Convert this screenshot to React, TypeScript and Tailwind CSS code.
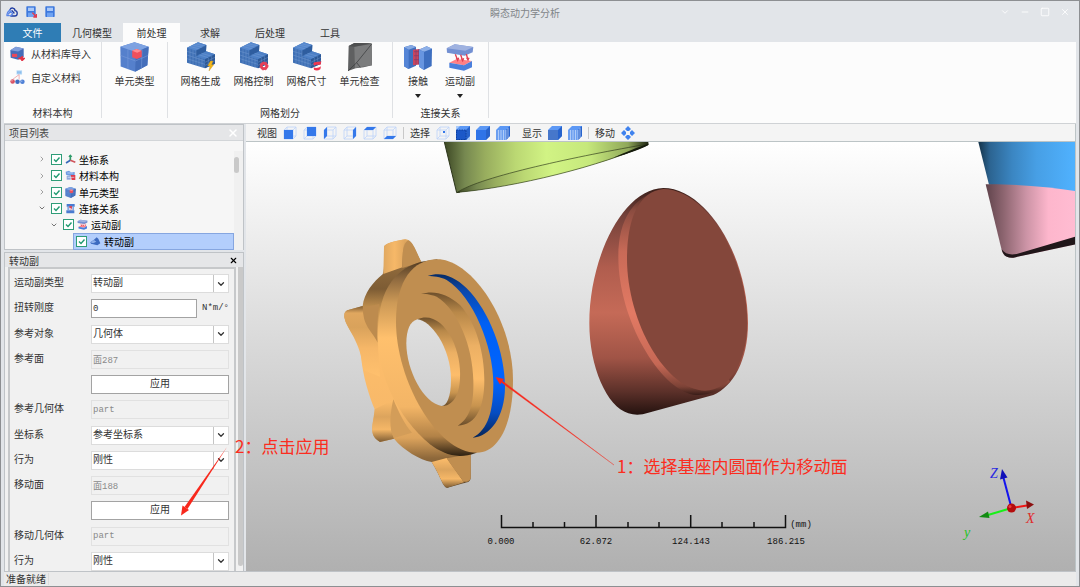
import { useState, type ReactNode } from "react";
import { ChevronDown, ChevronRight, Minus, Square, X } from "lucide-react";

const tabs = [
  { name: "几何模型", width: "w-[62px]" },
  { name: "前处理", width: "w-[57px]" },
  { name: "求解", width: "w-[60px]" },
  { name: "后处理", width: "w-[60px]" },
  { name: "工具", width: "w-[60px]" },
];

/* ---------- Icons ---------- */

function CloudIcon() {
  return (
    <svg viewBox="0 0 36 30" className="w-3 h-[10px]" fill="none" strokeWidth="4" strokeLinecap="round">
      <path d="M12 8 C15 0 27 2 27 11 C36 12 36 27 26 27 H15 M24 18 L18 11" stroke="#1d3aa0" />
      <path d="M12 8 C7 12 2 20 3 26 H10 M7 21 L14 13 L20 20 L14 27" stroke="#5a86e8" />
    </svg>
  );
}

function SaveIcon({ arrow = false }: { arrow?: boolean }) {
  return (
    <svg viewBox="0 0 33 36" className="w-[11px] h-3">
      <rect x="1" y="1" width="28" height="32" rx="2" fill="#3d78dd" />
      <rect x="6" y="5" width="18" height="10" fill="#a9c8f8" />
      <rect x="6" y="20" width="18" height="13" fill="#6ea2f2" />
      {arrow && <path d="M19 20 L30 32 M31 24 V33 H22" stroke="#e5394c" strokeWidth="4" fill="none" />}
    </svg>
  );
}

function CubeIcon({ small = false }: { small?: boolean }) {
  return (
    <svg viewBox="0 0 88 90" className={small ? "w-[11px] h-[11px]" : "w-[29px] h-[30px]"}>
      <path d="M44 0 L87 14 L83 70 L46 90 L2 74 L1 14 Z" fill="#5580cc" />
      <path d="M44 0 L87 14 L48 30 L1 14 Z" fill="#7ea3e2" />
      <path d="M48 30 L87 14 L83 70 L46 90 Z" fill="#446eba" />
      <path
        d="M24 22 L24 82 M1 40 L47 57 L86 40 M67 22 L65 80 M22 7 L67 22 M66 7 L24 22"
        stroke="#7f9fdc"
        strokeWidth="1.5"
        fill="none"
      />
      <path d="M37 26 L50 21 L66 26 V45 L51 51 L37 46 Z" fill="#f0505c" />
      <path d="M37 26 L50 21 L66 26 L52 32 Z" fill="#ff8b90" />
    </svg>
  );
}

function MeshIcon({ badge }: { badge: "bolt" | "gear" | "size" }) {
  return (
    <svg viewBox="0 0 90 90" className="w-[30px] h-[30px]">
      <path d="M36 1 L61 9 L60 28 L87 37 V65 L57 79 L3 62 V17 Z" fill="#3f70b5" />
      <path d="M36 1 L61 9 L30 26 L3 17 Z" fill="#5587cd" />
      <path d="M60 28 L87 37 L57 52 L30 43 Z" fill="#4d80c6" />
      <path d="M30 26 L61 9 L60 28 L30 43 Z" fill="#2e5d9f" />
      <path d="M57 52 L87 37 V65 L57 79 Z" fill="#2c5896" />
      <path
        d="M3 28 L30 36 M3 39 L57 57 M3 50 L57 67 M12 20 V65 M21 23 V68 M30 26 V71 M39 46 V74 M48 49 V77 M57 61 L87 46 M57 70 L87 56 M67 47 V74 M77 42 V70 M11 13 L40 21 M20 9 L49 16 M28 5 L56 12 M38 38 L66 47 M46 34 L75 42"
        stroke="#86abdf"
        strokeWidth="1"
        fill="none"
      />
      {badge === "bolt" && <path d="M73 57 L65 72 H72 L69 87 L83 68 H77 L81 57 Z" fill="#f2b71c" stroke="#b98611" />}
      {badge === "gear" && (
        <>
          <circle cx="75" cy="72" r="8" fill="none" stroke="#e64058" strokeWidth="8" />
          <circle cx="75" cy="72" r="12" fill="none" stroke="#e64058" strokeWidth="3" strokeDasharray="5 5" />
        </>
      )}
      {badge === "size" && (
        <>
          <path d="M64 64 C70 57 81 62 88 58 L86 68 C78 70 74 66 66 71 Z" fill="#f0364e" />
          <path d="M65 76 C72 80 80 77 87 73 L85 82 C78 87 70 86 66 83 Z" fill="#f0364e" />
        </>
      )}
    </svg>
  );
}

function CheckCellIcon() {
  return (
    <svg viewBox="0 0 78 90" className="w-[26px] h-[30px]">
      <path d="M5 12 L22 3 L74 4 L75 70 L50 76 L26 79 L3 87 Z" fill="#5f6061" />
      <path d="M22 14 L74 6 L75 70 L24 78 Z" fill="#7b7c7d" />
      <path d="M5 12 L22 3 L74 4 L22 14 Z" fill="#4e4f50" />
      <path d="M74 6 L29 62 L3 87" stroke="#343536" strokeWidth="2" fill="none" />
      <path d="M29 62 L40 76" stroke="#343536" strokeWidth="2" />
    </svg>
  );
}

function ContactIcon({ small = false }: { small?: boolean }) {
  return (
    <svg viewBox="0 0 88 84" className={small ? "w-[11px] h-[11px]" : "w-[30px] h-7"}>
      <path d="M2 13 L24 6 L38 12 V68 L16 78 L2 70 Z" fill="#3e6fc0" />
      <path d="M2 13 L24 6 L38 12 L16 20 Z" fill="#86a9e3" />
      <path d="M2 13 L16 20 V78 L2 70 Z" fill="#5585d6" />
      <path d="M29 20 L55 17 V64 L29 67 Z" fill="#c9455e" />
      <path d="M32 26 H53 M32 38 H53 M32 50 H53 M38 20 V65 M46 19 V64" stroke="#7c3d70" strokeWidth="2" />
      <path d="M47 20 L70 10 L86 17 L85 69 L62 81 L47 71 Z" fill="#3e6fc0" />
      <path d="M47 20 L70 10 L86 17 L62 26 Z" fill="#8eb0e8" />
      <path d="M47 20 L62 26 V81 L47 71 Z" fill="#6795e0" />
    </svg>
  );
}

function JointIcon({ small = false }: { small?: boolean }) {
  return (
    <svg viewBox="0 0 88 84" className={small ? "w-[11px] h-[11px]" : "w-[30px] h-7"}>
      <path d="M4 16 L28 4 L84 12 L82 28 L58 38 L5 29 Z" fill="#7390d2" />
      <path d="M4 16 L28 4 L84 12 L60 23 Z" fill="#9fb2e0" />
      <path d="M12 59 L34 48 L80 54 L56 67 Z" fill="#ff8086" />
      <path d="M12 59 L56 67 L80 54 V73 L56 83 L12 74 Z" fill="#4a7fdc" />
      <path d="M30 34 L37 52 M46 35 L52 53 M63 33 L68 51 M33 44 L37 52 L40 44 M48 46 L52 53 L55 46 M64 44 L68 51 L71 44" stroke="#e23f51" strokeWidth="4" fill="none" />
    </svg>
  );
}

function ImportIcon() {
  return (
    <svg viewBox="0 0 46 46" className="w-[15px] h-[15px] shrink-0">
      <path d="M1 13 L18 2 L42 8 V34 L25 42 L2 36 Z" fill="#456cb8" />
      <path d="M1 13 L18 2 L42 8 L25 17 Z" fill="#809fdc" />
      <path d="M6 24 H22 V34 H6 Z" fill="#e7485a" />
      <path d="M25 38 C35 42 38 36 38 31 M32 37 L44 38 L37 45 Z" stroke="#e23346" strokeWidth="4" fill="#e23346" />
    </svg>
  );
}

function CustomMaterialIcon() {
  return (
    <svg viewBox="0 0 46 46" className="w-[15px] h-[15px] shrink-0">
      <rect x="20" y="1" width="17" height="13" fill="#b9daf7" />
      <path d="M24 4 V11 M28 4 V11 M33 4 V11" stroke="#5d9fe0" strokeWidth="2" />
      <path d="M28 14 L8 29 M28 14 V29" stroke="#e88a8f" strokeWidth="2" />
      <circle cx="8" cy="35" r="7" fill="#d95365" />
      <circle cx="23" cy="36" r="7" fill="#3f6cc0" />
      <circle cx="38" cy="36" r="7" fill="#4f80d6" />
      <circle cx="6" cy="33" r="2" fill="#f3b4bb" />
      <circle cx="36" cy="34" r="2" fill="#b4cdf3" />
    </svg>
  );
}

function AxesIcon() {
  return (
    <svg viewBox="0 0 33 33" className="w-[11px] h-[11px]" fill="none" strokeWidth="5">
      <path d="M16 20 V3" stroke="#2f9c6a" />
      <path d="M16 19 L3 27" stroke="#3668b8" />
      <path d="M16 19 L31 25" stroke="#d0545a" />
      <path d="M10 9 L16 1 L22 9 Z" fill="#2f9c6a" />
    </svg>
  );
}

function MaterialIcon() {
  return (
    <svg viewBox="0 0 33 33" className="w-[11px] h-[11px]">
      <path d="M2 5 L12 2 L18 7 L29 6 V16 L14 17 L3 14 Z" fill="#6d9be2" />
      <path d="M5 17 H17 V29 H5 Z" fill="#8fa9dd" />
      <path d="M17 15 H31 V30 H20 Z" fill="#df3d4d" />
      <path d="M7 9 H25 M8 22 H28" stroke="#dbe7fa" strokeWidth="2" />
    </svg>
  );
}

function LinkIcon() {
  return (
    <svg viewBox="0 0 33 33" className="w-[11px] h-[11px]">
      <path d="M5 3 H29 V11 H5 Z M4 22 H28 V31 H4 Z" fill="#4a7bd0" />
      <path d="M7 11 H13 V22 H7 Z M22 11 H27 V22 H22 Z" fill="#86a7e2" />
      <path d="M13 9 H21 V15 L17 24 V15 H13 Z" fill="#d9495c" />
    </svg>
  );
}

function RevoluteIcon() {
  return (
    <svg viewBox="0 0 33 33" className="w-[11px] h-[11px]">
      <path d="M1 19 L12 11 L20 4 L25 8 L31 22 L22 28 L3 23 Z" fill="#3d6bc0" />
      <path d="M1 19 L12 12 L19 17 L9 22 Z" fill="#8fb0ea" />
    </svg>
  );
}

type Face = "front" | "back" | "left" | "right" | "top" | "bottom" | "point";

const facePaths: Record<Face, string> = {
  front: "M1 4 H10 V13 H1 Z",
  back: "M4 1 H13 V10 H4 Z",
  left: "M1 4 L4 1 V10 L1 13 Z",
  right: "M10 4 L13 1 V10 L10 13 Z",
  top: "M1 4 L4 1 H13 L10 4 Z",
  bottom: "M1 13 L4 10 H13 L10 13 Z",
  point: "M7 5 H9 V7 H7 Z",
};

// Wire cube with one face painted
function FaceCube({ face }: { face: Face }) {
  return (
    <svg viewBox="0 0 14 14" className="w-[14px] h-[14px]">
      <path d="M1 4 H10 V13 H1 Z M4 1 H13 V10 H4 Z M1 4 L4 1 M10 4 L13 1 M1 13 L4 10 M10 13 L13 10" stroke="#bcd3fa" strokeWidth="0.8" fill="none" />
      <path d={facePaths[face]} fill="#3478ea" />
    </svg>
  );
}

const cubeFronts = { edge: "#1c58c8", solid: "#2f74e8", mesh: "#6c9ff0", deep: "#4677cb" };

function SolidCube({ kind }: { kind: "edge" | "solid" | "mesh" | "deep" }) {
  return (
    <svg viewBox="0 0 14 14" className="w-[14px] h-[14px]">
      <path d="M0 4 L4 0 H14 V10 L10 14 H0 Z" fill="#5c98f5" />
      <path d="M0 4 H10 V14 H0 Z" fill={cubeFronts[kind]} />
      <path d="M10 4 L14 0 V10 L10 14 Z" fill="#2763cc" />
      {kind === "mesh" && <path d="M2.5 4 V14 M5 4 V14 M7.5 4 V14 M10 4 V14 M12 2 V12" stroke="#cfe0fb" strokeWidth="0.7" />}
      {kind === "edge" && <path d="M0.5 4 H10 V13.5 H0.5 Z" stroke="#0d3a92" strokeWidth="0.8" strokeDasharray="1.5 1" fill="none" />}
    </svg>
  );
}

function MoveIcon() {
  return (
    <svg viewBox="0 0 14 14" className="w-[14px] h-[14px]" fill="#3f82ee">
      <path d="M7 0 L10 3 L8 5 H6 L4 3 Z M7 14 L10 11 L8 9 H6 L4 11 Z M0 7 L3 4 L5 6 V8 L3 10 Z M14 7 L11 4 L9 6 V8 L11 10 Z" />
    </svg>
  );
}

/* ---------- Ribbon ---------- */

function RibbonGroup({ title, className, children }: { title?: string; className: string; children: ReactNode }) {
  return (
    <section className={`flex flex-col justify-between border-r border-[#dfe1e4] h-[76px] ${className}`}>
      {children}
      {title && <h2 className="text-center text-[10px] leading-[10px]">{title}</h2>}
    </section>
  );
}

function RibbonButton({ label, icon, className, menu = false }: { label: string; icon: ReactNode; className: string; menu?: boolean }) {
  return (
    <button className={`flex flex-col items-center ${className}`}>
      <span className="h-[30px] flex items-center">{icon}</span>
      <span className="mt-[3px] text-[10px] leading-3 whitespace-nowrap">{label}</span>
      {menu && (
        <svg viewBox="0 0 6 4" className="w-[6px] h-1 mt-[7px]">
          <path d="M0 0 H6 L3 4 Z" fill="#222" />
        </svg>
      )}
    </button>
  );
}

function Ribbon() {
  return (
    <div className="flex shrink-0 bg-[#fcfcfc] h-[82px] text-[#333] border-b border-[#cfd2d5]">
      <RibbonGroup title="材料本构" className="w-[98px]">
        <div className="pl-[6px] pt-[3px] flex flex-col gap-2">
          <button className="flex items-center gap-[6px] h-4 text-[10px] whitespace-nowrap">
            <ImportIcon />
            从材料库导入
          </button>
          <button className="flex items-center gap-[6px] h-4 text-[10px] whitespace-nowrap">
            <CustomMaterialIcon />
            自定义材料
          </button>
        </div>
      </RibbonGroup>
      <RibbonGroup className="w-[66px]">
        <RibbonButton label="单元类型" icon={<CubeIcon />} className="w-full" />
      </RibbonGroup>
      <RibbonGroup title="网格划分" className="w-[225px]">
        <div className="flex pl-[6px]">
          <RibbonButton label="网格生成" icon={<MeshIcon badge="bolt" />} className="w-[53px]" />
          <RibbonButton label="网格控制" icon={<MeshIcon badge="gear" />} className="w-[53px]" />
          <RibbonButton label="网格尺寸" icon={<MeshIcon badge="size" />} className="w-[53px]" />
          <RibbonButton label="单元检查" icon={<CheckCellIcon />} className="w-[53px]" />
        </div>
      </RibbonGroup>
      <RibbonGroup title="连接关系" className="w-24">
        <div className="flex pl-1">
          <RibbonButton label="接触" icon={<ContactIcon />} className="w-[42px]" menu />
          <RibbonButton label="运动副" icon={<JointIcon />} className="w-[42px]" menu />
        </div>
      </RibbonGroup>
    </div>
  );
}

/* ---------- Project tree ---------- */

const treeRows = [
  { label: "坐标系", icon: <AxesIcon />, indent: "pl-[33px]", arrow: "right" },
  { label: "材料本构", icon: <MaterialIcon />, indent: "pl-[33px]", arrow: "right" },
  { label: "单元类型", icon: <CubeIcon small />, indent: "pl-[33px]", arrow: "right" },
  { label: "连接关系", icon: <LinkIcon />, indent: "pl-[33px]", arrow: "down" },
  { label: "运动副", icon: <JointIcon small />, indent: "pl-[45px]", arrow: "down" },
  { label: "转动副", icon: <RevoluteIcon />, indent: "pl-[68px]", arrow: "" },
];

function ProjectTree() {
  return (
    <section className="border border-[#bfc3c7] bg-[#f6f6f6] h-[126px] flex flex-col shrink-0">
      <header className="h-4 shrink-0 flex items-center justify-between px-1 bg-[#e5e6e8] border-b border-[#d2d5d8]">
        <h2 className="text-[10px] text-[#444]">项目列表</h2>
        <button aria-label="关闭项目列表">
          <X className="w-3 h-3 text-white" strokeWidth={3} />
        </button>
      </header>
      <div className="flex grow pt-[10px]">
        <ul className="grow h-[99px] flex flex-col text-[10px] text-black">
          {treeRows.map((row) => (
            <li key={row.label} className={`flex-1 flex items-center ${row.indent}`}>
              {row.arrow === "right" && <ChevronRight className="w-2 h-2 mr-1 text-[#777]" />}
              {row.arrow === "down" && <ChevronDown className="w-2 h-2 mr-1 text-[#333]" />}
              <label
                className={`flex items-center gap-[3px] h-full grow ${
                  row.arrow === "" ? "bg-[#b3cefc] border border-[#86a6e0] pl-[2px]" : "pl-px"
                }`}
              >
                <span className="relative flex">
                  <input type="checkbox" defaultChecked className="peer appearance-none w-[11px] h-[11px] border border-[#2f9d78] bg-white" />
                  <svg viewBox="0 0 11 11" className="absolute inset-0 w-[11px] h-[11px] pointer-events-none hidden peer-checked:block">
                    <path d="M3 5.5 L5 7.5 L8.5 3.5" stroke="#1f9a70" strokeWidth="1.4" fill="none" />
                  </svg>
                </span>
                {row.icon}
                <span>{row.label}</span>
              </label>
            </li>
          ))}
        </ul>
        <div className="w-[9px] h-[99px] bg-[#f0f0f0]">
          <div className="w-[5px] h-4 mt-[6px] rounded-full bg-[#c9c9c9]" />
        </div>
      </div>
    </section>
  );
}

/* ---------- Property form ---------- */

function FormRow({ id, label, children }: { id?: string; label?: string; children: ReactNode }) {
  return (
    <div className="flex items-center">
      <div className="w-[77px] shrink-0">{label && <label htmlFor={id}>{label}</label>}</div>
      <div className="w-[138px] flex items-center">{children}</div>
    </div>
  );
}

function SelectField({ id, label, value }: { id: string; label: string; value: string }) {
  return (
    <FormRow id={id} label={label}>
      <div className="relative w-full">
        <select id={id} className="appearance-none block w-full h-[19px] pl-px bg-white border border-[#dcdcdc] text-[#333]">
          <option>{value}</option>
        </select>
        <span className="absolute right-px top-px w-[15px] h-[17px] border-l border-[#c4c4c4] flex items-center justify-center pointer-events-none">
          <ChevronDown className="w-[10px] h-[10px] text-[#333]" strokeWidth={3} />
        </span>
      </div>
    </FormRow>
  );
}

function ReadonlyField({ id, label, value }: { id: string; label: string; value: string }) {
  return (
    <FormRow id={id} label={label}>
      <input id={id} disabled defaultValue={value} className="w-full h-[19px] pl-px bg-[#f1f1f1] border border-[#e1e1e1] text-[#8a8a8a] text-[9px]" />
    </FormRow>
  );
}

function ApplyRow() {
  return (
    <FormRow>
      <button type="button" className="w-full h-[19px] bg-white border border-[#a3a3a3] text-[#333]">
        应用
      </button>
    </FormRow>
  );
}

function JointForm() {
  const [stiffness, setStiffness] = useState("0");

  return (
    <section className="mt-[2px] border border-b-0 border-[#bfc3c7] bg-[#f1f1f1] grow min-h-0 flex flex-col">
      <header className="h-[14px] shrink-0 flex items-center justify-between pl-1 pr-[5px] bg-[#e5e6e8]">
        <h2 className="text-[10px] text-[#333]">转动副</h2>
        <button aria-label="关闭转动副">
          <X className="w-[9px] h-[9px] text-black" strokeWidth={3} />
        </button>
      </header>
      <div className="flex justify-between grow min-h-0 pl-[3px]">
        <form className="w-[228px] border-2 border-b-0 border-[#c6c8ca] overflow-hidden pl-1 pt-[2px] text-[#333] text-[10px] font-['Liberation_Mono','Noto_Sans_CJK_SC',monospace]">
          <div className="h-[303px] grid grid-rows-12">
            <SelectField id="joint-type" label="运动副类型" value="转动副" />
            <FormRow id="stiffness" label="扭转刚度">
              <input
                id="stiffness"
                value={stiffness}
                onChange={(e) => setStiffness(e.target.value)}
                className="w-[106px] h-[19px] shrink-0 pl-px bg-white border border-[#a3a3a3] text-[9px]"
              />
              <span className="pl-[5px] text-[9px]">N*m/°</span>
            </FormRow>
            <SelectField id="ref-object" label="参考对象" value="几何体" />
            <ReadonlyField id="ref-face" label="参考面" value="面287" />
            <ApplyRow />
            <ReadonlyField id="ref-body" label="参考几何体" value="part" />
            <SelectField id="csys" label="坐标系" value="参考坐标系" />
            <SelectField id="ref-behavior" label="行为" value="刚性" />
            <ReadonlyField id="move-face" label="移动面" value="面188" />
            <ApplyRow />
            <ReadonlyField id="move-body" label="移动几何体" value="part" />
            <SelectField id="move-behavior" label="行为" value="刚性" />
          </div>
        </form>
        <div className="w-[5px] mb-[5px] bg-[#c9c9c9] rounded-b" />
      </div>
    </section>
  );
}

/* ---------- 3D view ---------- */

function ViewToolbar() {
  const views: Face[] = ["front", "back", "left", "right", "top", "bottom"];
  return (
    <div className="h-[18px] shrink-0 flex items-center gap-[6px] pl-[11px] bg-[#f4f4f4] border-b border-[#bcc4c6] text-[10px] text-[#333] whitespace-nowrap">
      <span>视图</span>
      {views.map((face) => (
        <button key={face} aria-label={face}>
          <FaceCube face={face} />
        </button>
      ))}
      <span className="w-px h-3 bg-[#c8c8c8]" />
      <span>选择</span>
      <button aria-label="point"><FaceCube face="point" /></button>
      <button aria-label="edge" className="bg-[#a9caf9]"><SolidCube kind="edge" /></button>
      <button aria-label="face"><SolidCube kind="solid" /></button>
      <button aria-label="element"><SolidCube kind="mesh" /></button>
      <span className="pl-[6px]">显示</span>
      <button aria-label="shaded"><SolidCube kind="deep" /></button>
      <button aria-label="meshed"><SolidCube kind="mesh" /></button>
      <span className="w-px h-3 bg-[#c8c8c8]" />
      <span>移动</span>
      <button aria-label="move"><MoveIcon /></button>
    </div>
  );
}

function Shade({ id, stops, horizontal = false }: { id: string; stops: [string, string][]; horizontal?: boolean }) {
  return (
    <linearGradient id={id} x1="0" y1="0" x2={horizontal ? "1" : "0"} y2={horizontal ? "0" : "1"}>
      {stops.map(([offset, color]) => (
        <stop key={offset} offset={offset} stopColor={color} />
      ))}
    </linearGradient>
  );
}

function Housing() {
  return (
    <g transform="translate(330 230) scale(0.33333)">
      {/* back body and lugs */}
      <path
        d="M162 52 C162 40 200 32 228 28 C246 28 262 75 274 96 L440 660 L422 674 L422 745 C420 757 412 757 400 760 L352 773 C338 772 335 745 305 696 C270 690 220 660 192 626 L150 636 C128 622 126 610 127 590 C128 565 136 555 134 538 C118 500 98 440 92 370 C90 330 50 300 43 262 C42 250 46 244 52 241 L98 228 C102 190 130 155 158 133 C164 120 162 90 162 52 Z"
        fill="url(#housing-body)"
      />
      <path d="M162 52 C162 40 200 32 228 28 C222 34 217 60 217 112 L160 132 Z" fill="url(#lug)" />
      <path d="M43 255 C42 250 46 244 52 241 L98 228 L100 250 L143 335 L150 440 L100 420 C92 330 50 300 43 262 Z" fill="url(#lug-left)" />
      <path d="M134 538 L190 510 L184 600 L192 626 L150 636 C128 622 126 610 127 590 Z" fill="url(#lug-low)" />
      <path d="M305 696 L350 684 L402 757 L352 773 C338 772 335 745 305 696 Z" fill="url(#lug-low)" />
      <path d="M235 31 C222 38 217 55 217 114 L274 96 C258 65 250 36 235 31 Z" fill="#c08e50" />
      <path d="M99 232 L148 222 C142 260 141 300 143 338 C125 300 98 290 99 232 Z" fill="#bd8b4e" />
      <path d="M190 508 C205 545 225 585 246 608 L192 624 C176 600 180 550 190 508 Z" fill="#d39d59" />
      <path d="M350 685 L422 672 V745 C418 757 408 756 400 755 C390 740 370 715 350 685 Z" fill="#c08e50" />
      {/* rim */}
      <path d="M274 95 C210 112 143 160 143 320 C143 430 200 560 300 643 C340 672 380 690 440 668 L322 88 Z" fill="url(#housing-rim)" />
      <path
        d="M322 88 C425 88 549 270 549 450 C549 585 505 668 440 668 C320 668 198 450 198 275 C198 150 250 88 322 88 Z"
        fill="#c08e50"
      />
      <path
        d="M293 138 C330 125 370 135 410 175 C480 245 525 370 525 470 C525 560 480 620 428 623 C475 600 490 540 490 460 C490 350 430 200 350 150 C330 140 310 138 293 138 Z"
        fill="url(#groove)"
      />
      <path
        d="M273 192 C310 180 350 190 390 225 C440 280 463 370 463 450 C463 530 440 585 383 587 C420 565 432 520 430 450 C428 350 385 240 320 200 C300 192 285 192 273 192 Z"
        fill="url(#step)"
      />
      <path
        d="M262 268 C300 250 340 275 365 325 C385 365 392 410 390 445 C388 500 365 530 335 528 C310 480 300 300 262 268 Z"
        fill="url(#step)"
      />
      <path
        d="M262 268 C300 270 363 350 363 450 C363 500 350 528 335 528 C280 520 229 420 229 340 C229 300 240 275 262 268 Z"
        fill="url(#hole)"
      />
    </g>
  );
}

function Plug() {
  return (
    <g transform="translate(570 180) scale(0.33333)">
      <path
        d="M280 24 C410 24 534 230 534 430 C534 540 490 620 430 645 L235 698 C215 705 195 706 175 700 C110 680 58 560 58 430 C58 230 160 26 280 24 Z"
        fill="url(#plug-side)"
      />
      <path
        d="M280 30 C190 45 145 120 145 230 C145 420 270 625 370 644 C410 648 450 635 480 605 L300 300 Z"
        fill="url(#plug-edge)"
      />
      <path
        d="M280 27 C405 27 532 230 532 430 C532 540 480 632 405 632 C290 632 171 430 171 235 C171 120 205 34 280 27 Z"
        fill="#84473b"
      />
    </g>
  );
}

function Scene() {
  return (
    <svg viewBox="246 142 829 429" preserveAspectRatio="xMidYMid slice" className="block w-full h-full" role="img" aria-label="模型视图">
      <defs>
        <Shade id="housing-body" stops={[["0", "#e5ab62"], ["0.12", "#8d683b"], ["0.2", "#7d5c34"], ["0.28", "#c4924f"], ["0.45", "#fdbd6b"], ["0.68", "#f8b969"], ["0.8", "#dca35c"], ["0.88", "#8f693b"], ["1", "#5a4225"]]} />
        <Shade id="housing-rim" stops={[["0", "#4a361f"], ["0.1", "#8f6a3f"], ["0.22", "#cc9956"], ["0.4", "#ffc06d"], ["0.75", "#f3b566"], ["0.9", "#b28247"], ["1", "#2e2112"]]} />
        <Shade id="lug" horizontal stops={[["0", "#e0a860"], ["0.5", "#f6b868"], ["1", "#dca45d"]]} />
        <Shade id="lug-left" stops={[["0", "#7d5c34"], ["0.1", "#e0a75f"], ["0.3", "#d9a25b"], ["0.6", "#f6b768"], ["1", "#ffc06d"]]} />
        <Shade id="lug-low" stops={[["0", "#fdbd6b"], ["0.4", "#dca45d"], ["0.7", "#f5b767"], ["1", "#7d5c34"]]} />
        <Shade id="groove" stops={[["0", "#052b66"], ["0.1", "#0c48ab"], ["0.3", "#0060f4"], ["0.65", "#0064ff"], ["0.85", "#064cc0"], ["1", "#062456"]]} />
        <Shade id="step" stops={[["0", "#6e502c"], ["0.15", "#b88849"], ["0.4", "#ecb064"], ["0.65", "#fdbd6b"], ["0.85", "#c8944f"], ["1", "#6a4d2b"]]} />
        <Shade id="hole" stops={[["0", "#e0e0e0"], ["1", "#cfcfcf"]]} />
        <Shade id="plug-side" stops={[["0", "#3a1e19"], ["0.12", "#74413a"], ["0.35", "#b05d4e"], ["0.55", "#c56a57"], ["0.75", "#a05446"], ["0.9", "#5b3029"], ["1", "#24120f"]]} />
        <Shade id="plug-edge" stops={[["0", "#4b2820"], ["0.1", "#8b4c40"], ["0.3", "#c86a57"], ["0.6", "#e37a64"], ["0.85", "#c66855"], ["0.96", "#7c4236"], ["1", "#3a1e19"]]} />
        <Shade id="green" horizontal stops={[["0", "#3c4724"], ["0.1", "#768850"], ["0.2", "#98ad5e"], ["0.35", "#bbd873"], ["0.5", "#d1f384"], ["0.7", "#c6e87c"], ["0.9", "#8fa759"], ["1", "#1c2210"]]} />
        <Shade id="blue" horizontal stops={[["0", "#153349"], ["0.12", "#2c6491"], ["0.35", "#3b86c2"], ["0.6", "#479fe5"], ["1", "#50b2ff"]]} />
        <Shade id="pink" horizontal stops={[["0", "#5f434b"], ["0.2", "#8d6570"], ["0.45", "#cb93a5"], ["0.7", "#fdb6cc"], ["1", "#ffbcd2"]]} />
      </defs>

      {/* green cup */}
      <g transform="translate(430 135) scale(0.33333)">
        <path d="M43 21 L80 173 C250 158 520 90 655 30 V21 Z" fill="url(#green)" />
        <path d="M82 172 C150 125 450 62 655 27 C520 92 250 158 82 172 Z" fill="url(#green)" stroke="#2e3819" strokeWidth="2" />
        <path d="M655 26 V30 C630 44 600 54 550 68 C590 50 620 38 655 26 Z" fill="#161b0d" />
        <path d="M43 21 L80 173 L90 171" stroke="#2c351b" strokeWidth="3" fill="none" />
      </g>

      {/* blue and pink cup */}
      <g transform="translate(950 130) scale(0.33333)">
        <path d="M85 36 L117 164 L376 186 V36 Z" fill="url(#blue)" />
        <path d="M107 163 L155 360 C160 378 170 384 190 383 L376 343 V183 C290 170 190 162 107 163 Z" fill="url(#pink)" />
        <path d="M155 358 C160 378 170 384 190 383 L376 343 V320 L200 372 C180 376 165 372 155 358 Z" fill="#21171a" />
      </g>

      <Housing />
      <Plug />

      {/* scale bar */}
      <path d="M501.5 515 V527.5 H785.5 V515 M596 515 V527 M690.7 515 V527" stroke="#111" strokeWidth="1.5" fill="none" />
      <path d="M533 522 V527 M564.5 522 V527 M628 522 V527 M659 522 V527 M722 522 V527 M754 522 V527" stroke="#111" strokeWidth="1.5" />
      <g fontSize="9" fill="#111" textAnchor="middle" className="font-['Liberation_Mono',monospace]">
        <text x="501" y="544">0.000</text>
        <text x="596" y="544">62.072</text>
        <text x="691" y="544">124.143</text>
        <text x="786" y="544">186.215</text>
        <text x="801" y="527">(mm)</text>
      </g>

      {/* axis triad */}
      <g strokeWidth="2">
        <path d="M1011.5 508 L1003 476" stroke="#1414ee" />
        <path d="M1002 469 L1007.5 477.5 L1000 479.5 Z" fill="#1010b8" />
        <path d="M1011.5 508 L988 515" stroke="#19f019" />
        <path d="M979 517 L988 511.5 L989.5 518 Z" fill="#128a12" />
        <path d="M1011.5 508 L1027 505.5" stroke="#f01414" />
        <path d="M1034 504.5 L1026 500.5 L1027 509 Z" fill="#8c1010" />
        <circle cx="1011.5" cy="508" r="4.5" fill="#b40d0d" />
        <circle cx="1010" cy="506.5" r="1.5" fill="#ee3a3a" />
      </g>
      <g fontSize="14" fontStyle="italic" className="font-['Liberation_Serif',serif]">
        <text x="990" y="478" fill="#2a2ae0">Z</text>
        <text x="1026" y="523" fill="#e02a2a">X</text>
        <text x="964" y="537" fill="#1fc41f">y</text>
      </g>

      {/* step 1 callout */}
      <path d="M614 465 L502.5 381 L501.5 382.5 Z" fill="#f8281c" stroke="#f8281c" strokeWidth="0.3" />
      <path d="M495.5 377 L504 379 L500 384.5 Z" fill="#f8281c" />
      <text x="617" y="473" fontSize="17" fill="#fb2d20" className="font-['Noto_Sans_CJK_SC',sans-serif]">
        1：选择基座内圆面作为移动面
      </text>
    </svg>
  );
}

export default function App() {
  const [activeTab, setActiveTab] = useState("前处理");

  return (
    <div className="h-screen flex flex-col overflow-hidden bg-[#e2e5e9] border border-[#8d8f92] pl-[3px] pr-[3px] font-['Noto_Sans_CJK_SC',sans-serif]">
      {/* Title bar */}
      <header className="h-[22px] shrink-0 grid grid-cols-3 items-center">
        <div className="flex items-center gap-2 pl-[2px]">
          <button aria-label="主页"><CloudIcon /></button>
          <button aria-label="另存为"><SaveIcon arrow /></button>
          <button aria-label="保存"><SaveIcon /></button>
        </div>
        <h1 className="text-center text-[10px] text-[#7f8488] pr-[30px]">瞬态动力学分析</h1>
        <div className="flex items-center justify-end gap-[10px] pr-[6px] text-white">
          <button aria-label="折叠"><ChevronDown className="w-[10px] h-[10px]" /></button>
          <button aria-label="最小化"><Minus className="w-[10px] h-[10px]" /></button>
          <button aria-label="还原"><Square className="w-[10px] h-[10px]" /></button>
          <button aria-label="关闭"><X className="w-[10px] h-[10px]" /></button>
        </div>
      </header>

      {/* Tabs */}
      <nav className="flex h-[19px] shrink-0 text-[10px] text-[#333]">
        <button className="w-[57px] bg-[#2f7db5] text-white">文件</button>
        {tabs.map((tab) => (
          <button key={tab.name} onClick={() => setActiveTab(tab.name)} className={`${tab.width} ${activeTab === tab.name ? "bg-[#fcfcfc]" : ""}`}>
            {tab.name}
          </button>
        ))}
      </nav>

      <Ribbon />

      {/* Workspace */}
      <main className="relative flex grow min-h-0">
        <aside className="w-[241px] pr-px shrink-0 flex flex-col">
          <ProjectTree />
          <JointForm />
        </aside>
        <section className="grow min-w-0 ml-px flex flex-col border-r border-[#bcc4c6]">
          <ViewToolbar />
          <div className="grow min-h-0 bg-linear-to-b from-white to-[#b0b0b0]">
            <Scene />
          </div>
        </section>

        {/* step 2 callout, lies over both the form and the view */}
        <div className="absolute left-[176px] top-[312px] flex pointer-events-none">
          <svg viewBox="180 436 50 80" className="w-[50px] h-20">
            <path d="M227 447 L184.5 507 L187.5 509 Z" fill="#f8281c" />
            <path d="M181 515.5 L182.5 505.5 L189 510 Z" fill="#f8281c" />
          </svg>
          <p className="ml-[5px] text-[17px] leading-5 text-[#fb2d20] whitespace-nowrap">2：点击应用</p>
        </div>
      </main>

      <footer className="h-[15px] shrink-0 flex items-center bg-[#ebebeb] border-t border-[#bfc3c7] text-[10px] text-[#333]">
        <span className="pl-[2px] pr-[2px] leading-3 border-r border-[#dcdcdc]">准备就绪</span>
      </footer>
    </div>
  );
}
